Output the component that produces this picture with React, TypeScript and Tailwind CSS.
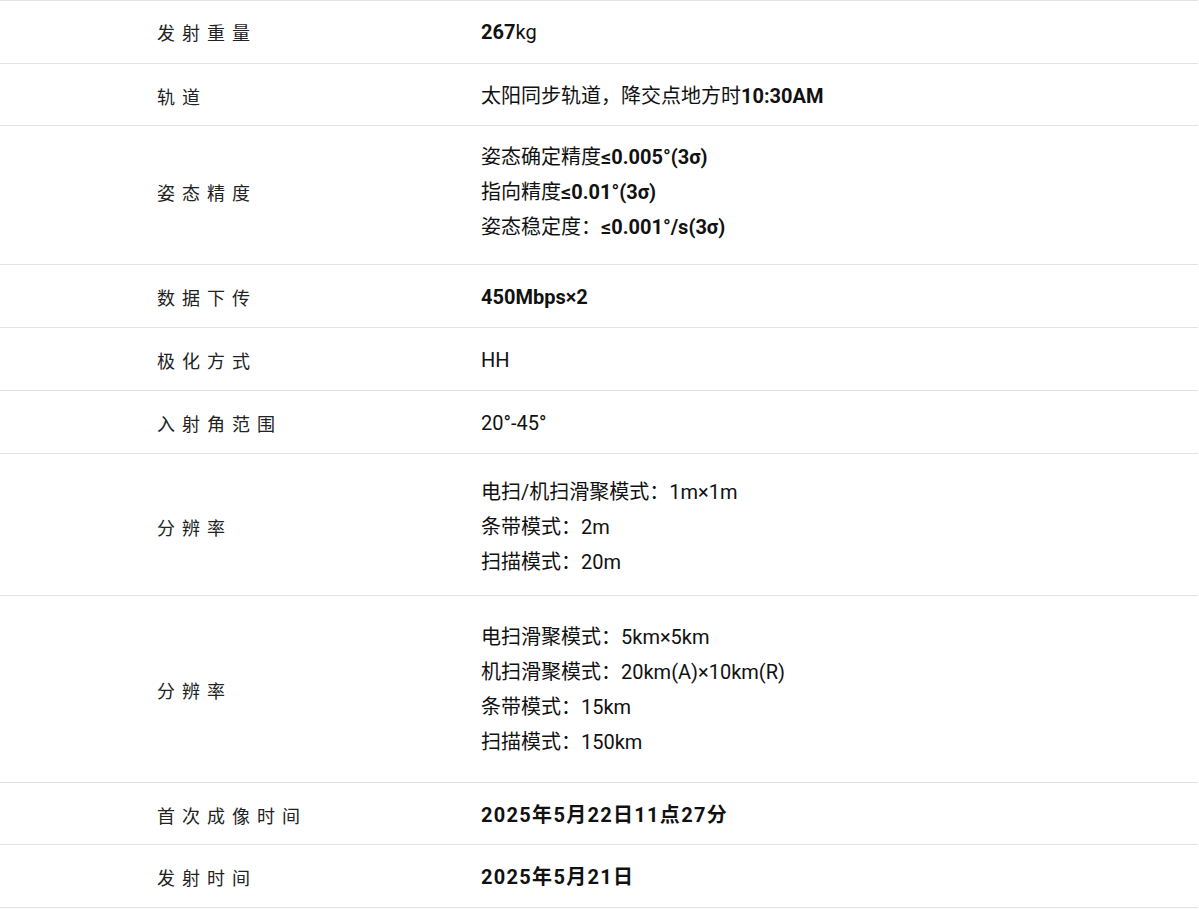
import React from "react";

type TRow = {
  label: string;
  lines: React.ReactNode[];
  pad: string;
};

const B = ({ children }: { children: React.ReactNode }) => (
  <span className="font-bold">{children}</span>
);

const rows: TRow[] = [
  {
    label: "发射重量",
    lines: [
      <>
        <B>267</B>kg
      </>,
    ],
    pad: "pt-[14px] pb-[13px]",
  },
  {
    label: "轨道",
    lines: [
      <>
        太阳同步轨道，降交点地方时<B>10:30AM</B>
      </>,
    ],
    pad: "pt-[15px] pb-[11px]",
  },
  {
    label: "姿态精度",
    lines: [
      <>
        姿态确定精度<B>≤0.005°(3σ)</B>
      </>,
      <>
        指向精度<B>≤0.01°(3σ)</B>
      </>,
      <>
        姿态稳定度：<B>≤0.001°/s(3σ)</B>
      </>,
    ],
    pad: "pt-[14px] pb-[19px]",
  },
  {
    label: "数据下传",
    lines: [<B>450Mbps×2</B>],
    pad: "pt-[15px] pb-[12px]",
  },
  { label: "极化方式", lines: ["HH"], pad: "pt-[15px] pb-[12px]" },
  { label: "入射角范围", lines: ["20°-45°"], pad: "pt-[15px] pb-[12px]" },
  {
    label: "分辨率",
    lines: ["电扫/机扫滑聚模式：1m×1m", "条带模式：2m", "扫描模式：20m"],
    pad: "pt-[21px] pb-[15px]",
  },
  {
    label: "分辨率",
    lines: [
      "电扫滑聚模式：5km×5km",
      "机扫滑聚模式：20km(A)×10km(R)",
      "条带模式：15km",
      "扫描模式：150km",
    ],
    pad: "pt-[24px] pb-[22px]",
  },
  {
    label: "首次成像时间",
    lines: [
      <span className="font-bold tracking-[1.3px]">2025年5月22日11点27分</span>,
    ],
    pad: "pt-[15px] pb-[11px]",
  },
  {
    label: "发射时间",
    lines: [<span className="font-bold tracking-[1.3px]">2025年5月21日</span>],
    pad: "pt-[15px] pb-[12px]",
  },
];

export default function App() {
  return (
    <main className="min-h-screen bg-white font-['Roboto','Noto_Sans_CJK_SC',sans-serif]">
      <div className="w-[1198px] border-t border-[#e3e3e3]">
        {rows.map((row, idx) => (
          <div
            key={idx}
            className={`flex items-center border-b border-[#e3e3e3] ${row.pad}`}
          >
            <div className="w-[481px] shrink-0 pl-[157px] font-['Noto_Sans_CJK_SC',sans-serif] text-[18px] tracking-[7px] text-[#222]">
              {row.label}
            </div>
            <div className="flex flex-col text-[20px] leading-[35px] text-[#111]">
              {row.lines.map((line, i) => (
                <div key={i}>{line}</div>
              ))}
            </div>
          </div>
        ))}
      </div>
    </main>
  );
}
